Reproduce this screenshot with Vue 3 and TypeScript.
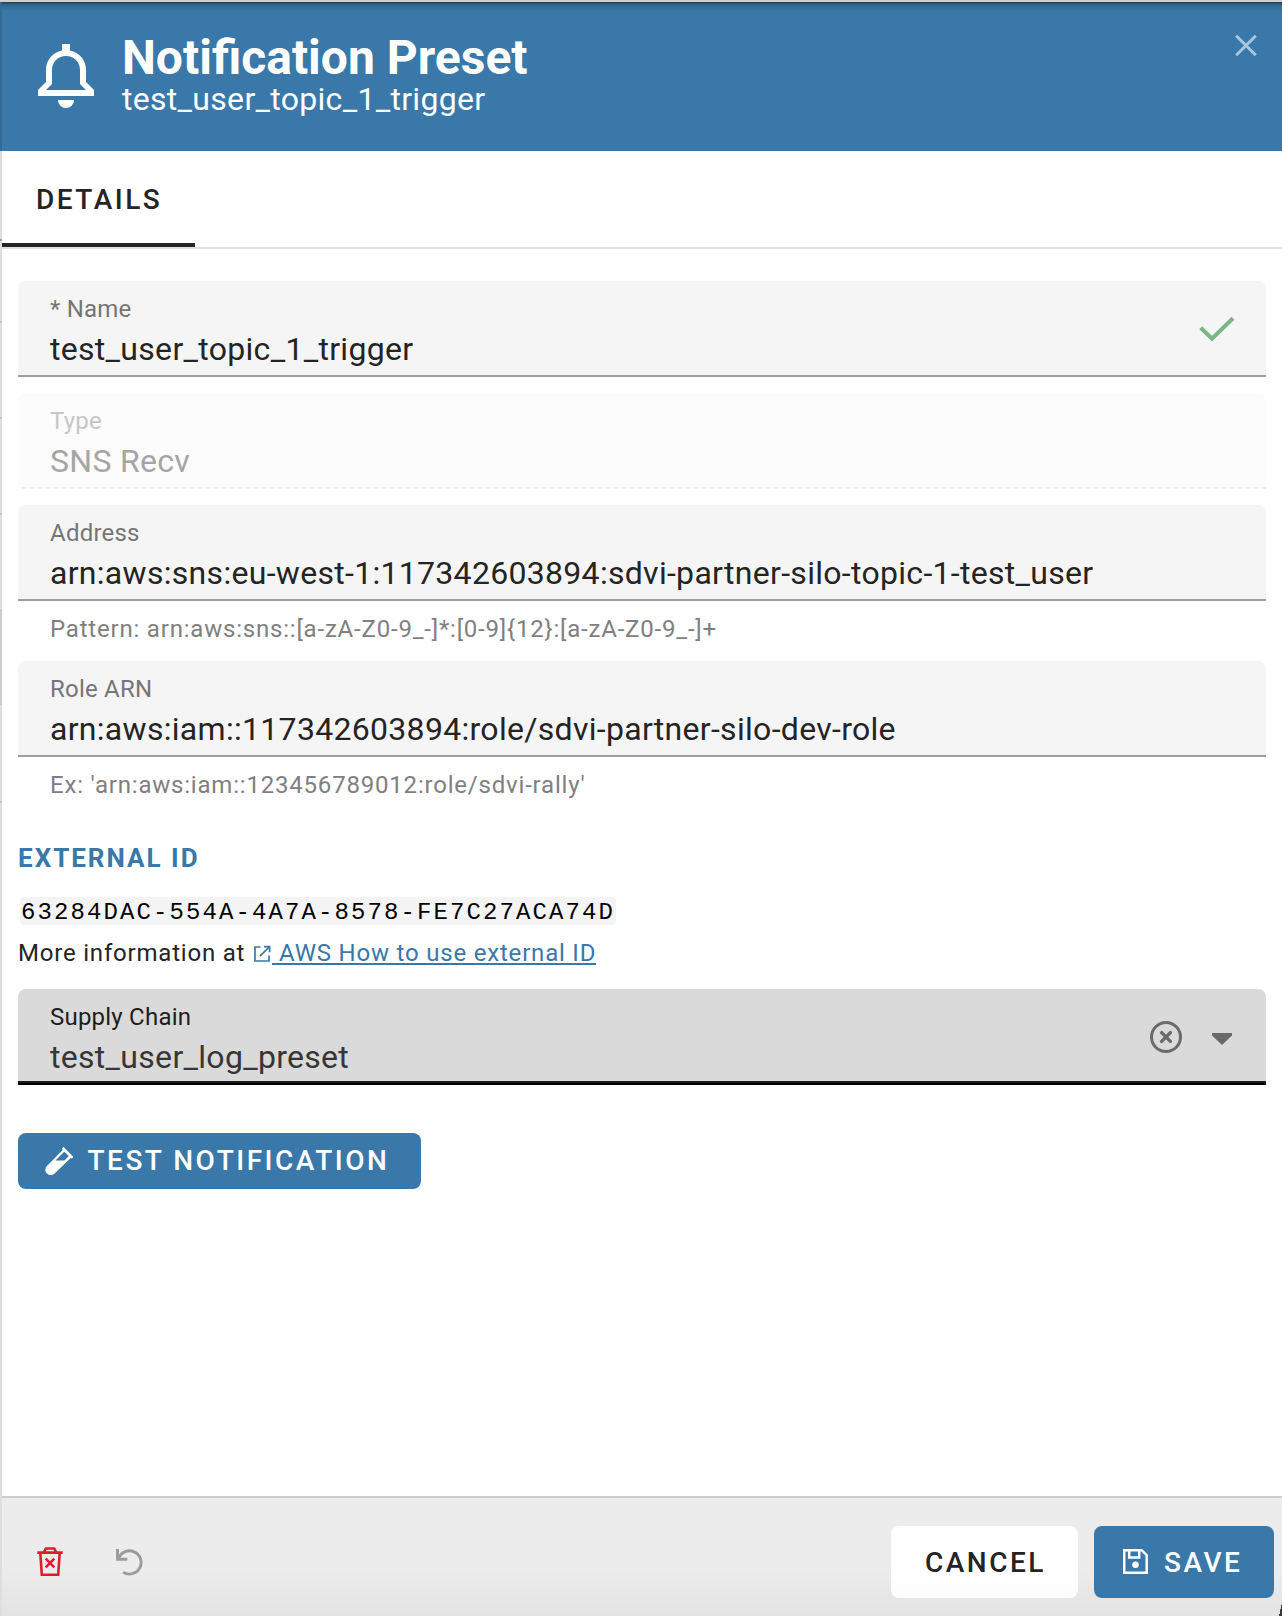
<script setup lang="ts">
interface Field {
  key: string
  label: string
  value: string
  hint?: string
  valid?: boolean
  disabled?: boolean
}

const topic = 'test_user_topic_1_trigger'

const fields: Field[] = [
  { key: 'name', label: '* Name', value: topic, valid: true },
  { key: 'type', label: 'Type', value: 'SNS Recv', disabled: true },
  {
    key: 'address',
    label: 'Address',
    value: 'arn:aws:sns:eu-west-1:117342603894:sdvi-partner-silo-topic-1-test_user',
    hint: 'Pattern: arn:aws:sns::[a-zA-Z0-9_-]*:[0-9]{12}:[a-zA-Z0-9_-]+',
  },
  {
    key: 'role',
    label: 'Role ARN',
    value: 'arn:aws:iam::117342603894:role/sdvi-partner-silo-dev-role',
    hint: "Ex: 'arn:aws:iam::123456789012:role/sdvi-rally'",
  },
]
</script>

<template>
  <div class="window">
    <div class="behind"></div>
    <main class="panel">
      <header class="head">
        <svg class="bell" width="56" height="64" viewBox="0 0 56 64">
          <path fill="#fff" fill-rule="evenodd" d="M24 0h8v6.5C41.500 8.500 48 16 48 26v12l8 8v6H0v-6l8-8V26C8 16 14.500 8.500 24 6.500zM28 12c-8 0-14 6-14 14v14l-6 6h40l-6-6V26c0-8-6-14-14-14z" />
          <path fill="#fff" d="M20 56h16a8 8 0 0 1-16 0z" />
        </svg>
        <div class="titles">
          <h1>Notification Preset</h1>
          <p>{{ topic }}</p>
        </div>
        <svg class="close" width="24" height="24" viewBox="0 0 24 24">
          <path d="M2.200 2.700l19.600 19.600M21.800 2.700L2.200 22.300" fill="none" stroke="#a9c6dc" stroke-width="3" />
        </svg>
      </header>

      <nav class="tabs"><span class="tab">DETAILS</span></nav>

      <section class="body">
        <div v-for="f in fields" :key="f.key" class="row">
          <div class="field" :class="{ disabled: f.disabled }">
            <div class="text">
              <label>{{ f.label }}</label>
              <span class="value">{{ f.value }}</span>
            </div>
            <svg v-if="f.valid" class="check" width="36" height="26" viewBox="0 0 36 26">
              <path d="M1.700 11.800L13 22.800L34 2.200" fill="none" stroke="#7bb686" stroke-width="4" />
            </svg>
          </div>
          <p v-if="f.hint" class="hint">{{ f.hint }}</p>
        </div>

        <h2>EXTERNAL ID</h2>
        <code>63284DAC-554A-4A7A-8578-FE7C27ACA74D</code>
        <p class="more">
          <span>More information at</span>
          <svg class="ext" width="18" height="18" viewBox="0 0 18 18">
            <path d="M7.500 2H2v14h14v-5.500M7 11.200L16.200 2M11 1.600h5.600v5.600" fill="none" stroke="#3978a9" stroke-width="1.700" />
          </svg>
          <a>&nbsp;AWS How to use external ID</a>
        </p>

        <div class="field focused">
          <div class="text">
            <label>Supply Chain</label>
            <span class="value">test_user_log_preset</span>
          </div>
          <svg class="clear" width="32" height="32" viewBox="0 0 32 32">
            <circle cx="16" cy="16" r="14.500" fill="none" stroke="#6a6a6a" stroke-width="3" />
            <path d="M11.600 11.600l8.800 8.800M20.400 11.600l-8.800 8.800" stroke="#6a6a6a" stroke-width="3.400" stroke-linecap="round" />
          </svg>
          <svg class="caret" width="20" height="12" viewBox="0 0 20 12">
            <path d="M0 0h20v2.500L10 12L0 2.500z" fill="#6a6a6a" />
          </svg>
        </div>

        <button class="btn test">
          <svg width="28" height="28" viewBox="0 0 28 28">
            <path fill="#fff" fill-rule="evenodd" d="M18.600 0L28.500 9.900L26.800 11.600L25.700 10.900L9.600 26.600A5.200 5.200 0 0 1 1.900 18.900L17.700 2.900L17 1.600zM19.200 4.700L10.500 13.400H19.500L23.800 9.100z" />
          </svg>
          <span>TEST NOTIFICATION</span>
        </button>
      </section>

      <footer class="foot">
        <svg class="trash" width="26" height="30" viewBox="0 0 26 30">
          <path d="M.3 5.600h25.400M6.800 5.400l2-3.900h8.400l2 3.900M3.300 6l1.500 21.800h16.400L22.700 6M8.700 11.700l8.600 8.600M17.300 11.700l-8.600 8.600" fill="none" stroke="#de1c2c" stroke-width="2.600" />
        </svg>
        <svg class="undo" width="28" height="28" viewBox="0 0 28 28">
          <path d="M1.500 0v10.300h9.800M2.500 9.800A11.600 11.600 0 1 1 7.200 23.200" fill="none" stroke="#9b9b9b" stroke-width="2.900" />
        </svg>
        <span class="grow"></span>
        <button class="btn cancel"><span>CANCEL</span></button>
        <button class="btn save">
          <svg width="25" height="25" viewBox="0 0 25 25">
            <path d="M1.200 1.200h17.500l5 5v17.500H1.200zM6.200 1.500v7h10v-7" fill="none" stroke="#fff" stroke-width="2.500" />
            <circle cx="12.500" cy="15.700" r="3.300" fill="#fff" />
          </svg>
          <span>SAVE</span>
        </button>
      </footer>
    </main>
  </div>
</template>

<style>
body {
  background: #fff;
}
</style>

<style scoped>
.window {
  box-sizing: border-box;
  width: 1282px;
  height: 1616px;
  border-top: 2px solid #d0d0d0;
  display: flex;
  overflow: hidden;
  font-family: Roboto, sans-serif;
  color: #242424;
}
h1,
h2,
p {
  margin: 0;
}
svg {
  display: block;
  flex: none;
}
.behind {
  width: 2px;
  flex: none;
  background:
    linear-gradient(#336b97, #336b97) 0 0 / 2px 149px no-repeat,
    linear-gradient(#a0a0a0, #a0a0a0) 0 237px / 2px 2px no-repeat,
    linear-gradient(#c4c4c4, #c4c4c4) 0 319px / 2px 2px no-repeat,
    linear-gradient(#c4c4c4, #c4c4c4) 0 415px / 2px 2px no-repeat,
    linear-gradient(#c4c4c4, #c4c4c4) 0 511px / 2px 2px no-repeat,
    linear-gradient(#cdcdcd, #cdcdcd) 0 607px / 2px 96px no-repeat,
    linear-gradient(#c4c4c4, #c4c4c4) 0 799px / 2px 2px no-repeat,
    #dedede;
}
.panel {
  flex: 1;
  display: flex;
  flex-direction: column;
}
.head {
  box-sizing: border-box;
  height: 149px;
  display: flex;
  align-items: flex-start;
  background: linear-gradient(rgba(0, 0, 0, 0.5), rgba(0, 0, 0, 0.15) 3px, rgba(0, 0, 0, 0) 9px), #3978a9;
  color: #fff;
  padding: 30px 24px 0 36px;
}
.bell {
  margin-top: 12px;
}
.titles {
  margin-left: 28px;
  flex: 1;
}
.titles h1 {
  font-size: 48px;
  line-height: 52px;
  font-weight: 700;
}
.titles p {
  font-size: 32px;
  line-height: 30px;
  letter-spacing: 0.3px;
}
.close {
  margin-top: 1px;
}
.tabs {
  height: 96px;
  border-bottom: 2px solid #e0e0e0;
  display: flex;
}
.tab {
  box-sizing: border-box;
  width: 193px;
  height: 96px;
  border-bottom: 4px solid #242424;
  padding-left: 34px;
  font-size: 28px;
  font-weight: 500;
  line-height: 98px;
  letter-spacing: 2.5px;
}
.body {
  flex: 1;
  padding: 32px 16px 0;
}
.field {
  box-sizing: border-box;
  height: 96px;
  border-radius: 8px 8px 0 0;
  background: linear-gradient(#9e9e9e, #9e9e9e) 0 100% / 100% 2px no-repeat, #f5f5f5;
  padding: 14px 32px 0;
  display: flex;
}
.text {
  flex: 1;
  display: flex;
  flex-direction: column;
  gap: 6px;
}
.row {
  margin-bottom: 16px;
}
label {
  font-size: 24px;
  line-height: 28px;
  letter-spacing: 0.22px;
  color: #757575;
}
.value {
  font-size: 32px;
  line-height: 40px;
  letter-spacing: 0.3px;
}
.disabled {
  background: repeating-linear-gradient(90deg, #ececec 0 2px, #fcfcfc 2px 6px, #ececec 6px 8px) -2px 100% / 1252px 2px no-repeat, #fcfcfc;
}
.disabled label {
  color: #c6c6c6;
}
.disabled .value {
  color: #a5a5a5;
}
.check {
  margin: 21px -1px 0 0;
}
.hint {
  height: 30px;
  padding: 14px 32px 0;
  font-size: 24px;
  line-height: 28px;
  letter-spacing: 0.8px;
  color: #808080;
}
h2 {
  padding-top: 25px;
  color: #3978a9;
  font-size: 26px;
  font-weight: 700;
  line-height: 32px;
  letter-spacing: 2px;
}
code {
  display: block;
  box-sizing: border-box;
  width: 596px;
  height: 28px;
  margin: 23px 0 0 2px;
  padding-left: 1px;
  border-radius: 4px;
  background: #f4f4f4;
  color: #000;
  font: 24px/32px 'Liberation Mono', monospace;
  letter-spacing: 2.1px;
  white-space: nowrap;
}
.more {
  margin-top: 14px;
  height: 28px;
  display: flex;
  font-size: 24px;
  line-height: 28px;
  letter-spacing: 0.8px;
  white-space: nowrap;
}
.ext {
  margin: 6px 1px 0 8px;
}
.more a {
  height: 24px;
  border-bottom: 2px solid #3978a9;
  color: #3978a9;
}
.focused {
  margin-top: 22px;
  background: linear-gradient(#1a1a1a 2px, #000 2px) 0 100% / 100% 4px no-repeat, #dadada;
}
.focused label {
  color: #1d1d1d;
}
.focused .value {
  color: #363636;
}
.clear {
  margin: 18px 30px 0 0;
}
.caret {
  margin: 30px 2px 0 0;
}
.btn {
  border: 0;
  border-radius: 8px;
  padding: 0;
  display: flex;
  align-items: center;
  font: 500 28px/32px Roboto, sans-serif;
  letter-spacing: 2.5px;
  color: #fff;
  background: #3978a9;
  white-space: nowrap;
}
.test {
  width: 403px;
  height: 56px;
  margin-top: 48px;
  padding-left: 27px;
  gap: 14.5px;
}
.foot {
  box-sizing: border-box;
  height: 120px;
  border-top: 2px solid #cdcdcd;
  background:
    linear-gradient(to bottom right, transparent 50%, #3a3a3a 52%) 100% 100% / 3px 14px no-repeat,
    linear-gradient(#ececec 60%, #e3e3e3);
  padding: 28px 8px 0 35px;
  display: flex;
}
.trash {
  margin-top: 21px;
}
.undo {
  margin: 23px 0 0 53px;
}
.grow {
  flex: 1;
}
.foot .btn {
  height: 72px;
}
.foot .btn span {
  padding-top: 2px;
}
.cancel {
  width: 187px;
  padding-left: 34px;
  margin-right: 16px;
  background: linear-gradient(#fff 60%, #fcfcfc);
  color: #242424;
}
.save {
  width: 180px;
  padding-left: 29px;
  gap: 16px;
}
.save svg {
  margin-bottom: 1px;
}
</style>
